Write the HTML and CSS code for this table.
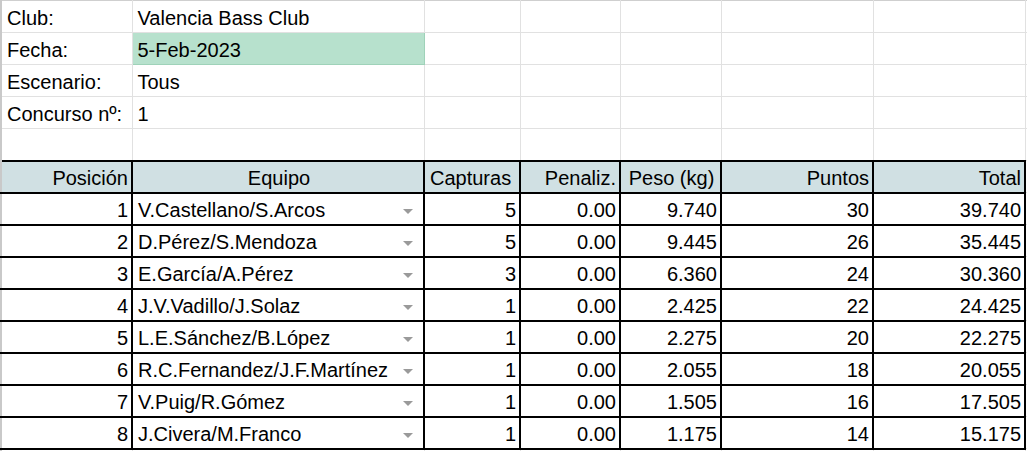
FILE: index.html
```html
<!DOCTYPE html>
<html lang="es">
<head>
<meta charset="utf-8">
<title>Valencia Bass Club</title>
<link rel="stylesheet" href="styles.css">
</head>
<body>
<table class="sheet">
  <colgroup>
    <col class="c-a"><col class="c-b"><col class="c-c"><col class="c-d"><col class="c-e"><col class="c-f"><col class="c-g"><col class="c-h">
  </colgroup>
  <tbody>
    <tr class="top first"><td>Club:</td><td>Valencia Bass Club</td><td></td><td></td><td></td><td></td><td></td><td></td></tr>
    <tr class="top"><td>Fecha:</td><td class="green">5-Feb-2023</td><td></td><td></td><td></td><td></td><td></td><td></td></tr>
    <tr class="top"><td>Escenario:</td><td>Tous</td><td></td><td></td><td></td><td></td><td></td><td></td></tr>
    <tr class="top"><td>Concurso nº:</td><td>1</td><td></td><td></td><td></td><td></td><td></td><td></td></tr>
    <tr class="top"><td></td><td></td><td></td><td></td><td></td><td></td><td></td><td></td></tr>
    <tr class="head">
      <td class="r">Posición</td><td class="c">Equipo</td><td>Capturas</td><td class="r">Penaliz.</td><td class="c">Peso (kg)</td><td class="r">Puntos</td><td class="r">Total</td><td class="out"></td>
    </tr>
    <tr class="row"><td class="r">1</td><td><div class="team"><span>V.Castellano/S.Arcos</span><i class="dd"></i></div></td><td class="r">5</td><td class="r">0.00</td><td class="r">9.740</td><td class="r">30</td><td class="r">39.740</td><td class="out"></td></tr>
    <tr class="row"><td class="r">2</td><td><div class="team"><span>D.Pérez/S.Mendoza</span><i class="dd"></i></div></td><td class="r">5</td><td class="r">0.00</td><td class="r">9.445</td><td class="r">26</td><td class="r">35.445</td><td class="out"></td></tr>
    <tr class="row"><td class="r">3</td><td><div class="team"><span>E.García/A.Pérez</span><i class="dd"></i></div></td><td class="r">3</td><td class="r">0.00</td><td class="r">6.360</td><td class="r">24</td><td class="r">30.360</td><td class="out"></td></tr>
    <tr class="row"><td class="r">4</td><td><div class="team"><span>J.V.Vadillo/J.Solaz</span><i class="dd"></i></div></td><td class="r">1</td><td class="r">0.00</td><td class="r">2.425</td><td class="r">22</td><td class="r">24.425</td><td class="out"></td></tr>
    <tr class="row"><td class="r">5</td><td><div class="team"><span>L.E.Sánchez/B.López</span><i class="dd"></i></div></td><td class="r">1</td><td class="r">0.00</td><td class="r">2.275</td><td class="r">20</td><td class="r">22.275</td><td class="out"></td></tr>
    <tr class="row"><td class="r">6</td><td><div class="team"><span>R.C.Fernandez/J.F.Martínez</span><i class="dd"></i></div></td><td class="r">1</td><td class="r">0.00</td><td class="r">2.055</td><td class="r">18</td><td class="r">20.055</td><td class="out"></td></tr>
    <tr class="row"><td class="r">7</td><td><div class="team"><span>V.Puig/R.Gómez</span><i class="dd"></i></div></td><td class="r">1</td><td class="r">0.00</td><td class="r">1.505</td><td class="r">16</td><td class="r">17.505</td><td class="out"></td></tr>
    <tr class="row"><td class="r">8</td><td><div class="team"><span>J.Civera/M.Franco</span><i class="dd"></i></div></td><td class="r">1</td><td class="r">0.00</td><td class="r">1.175</td><td class="r">14</td><td class="r">15.175</td><td class="out"></td></tr>
    <tr class="top"><td></td><td></td><td></td><td></td><td></td><td></td><td></td><td></td></tr>
  </tbody>
</table>
</body>
</html>
```
FILE: styles.css
```css
html, body {
  margin: 0;
  padding: 0;
  background: #ffffff;
  overflow: hidden;
}

.sheet {
  border-collapse: collapse;
  table-layout: fixed;
  width: 1084px;
  font-family: "Liberation Sans", Arial, sans-serif;
  font-size: 20px;
  color: #000000;
}

.c-a { width: 131px; }
.c-b { width: 292px; }
.c-c { width: 96px; }
.c-d { width: 100px; }
.c-e { width: 101px; }
.c-f { width: 152px; }
.c-g { width: 152px; }
.c-h { width: 60px; }

.sheet tr {
  height: 32px;
}

.sheet td {
  padding: 0 3px 2px 5px;
  line-height: 23px;
  vertical-align: bottom;
  white-space: nowrap;
  overflow: hidden;
  border: 1px solid #e1e1e1;
}

.sheet tr.first td {
  border-top: 1px solid #cfcfcf;
}

.sheet tr td:first-child {
  border-left: 2px solid #c9c9c9;
}

.sheet td.green {
  background: #b7e1cd;
  border: 1px solid #9fd2b9;
}

.sheet tr.head td,
.sheet tr.row td {
  border: 2px solid #000000;
}

.sheet tr.head td {
  background: #d0e0e3;
}

.sheet tr.head td:first-child,
.sheet tr.row td:first-child {
  border-left: 2px solid #c9c9c9;
}

.sheet tr.head td.out,
.sheet tr.row td.out {
  background: #ffffff;
  border: 1px solid #e1e1e1;
  border-left: 2px solid #000000;
}

.sheet td.r { text-align: right; }
.sheet td.c { text-align: center; }

.team {
  display: flex;
  align-items: center;
  justify-content: space-between;
}

.dd {
  display: block;
  width: 0;
  height: 0;
  margin-right: 7px;
  margin-top: 2px;
  border-left: 5px solid transparent;
  border-right: 5px solid transparent;
  border-top: 5px solid #9a9a9a;
}
```
